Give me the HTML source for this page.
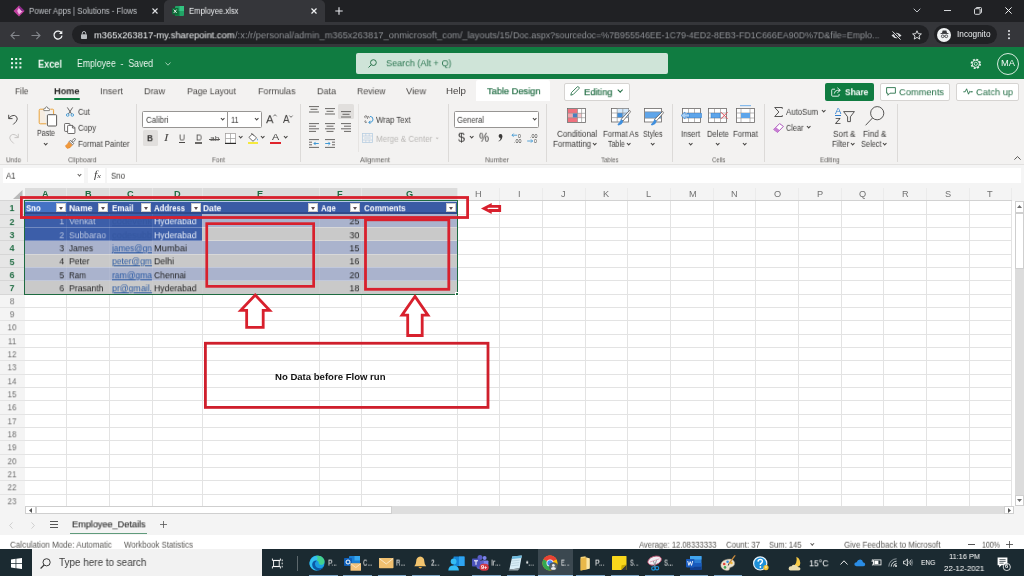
<!DOCTYPE html>
<html><head><meta charset="utf-8">
<style>
*{box-sizing:border-box;margin:0;padding:0}
html,body{width:1024px;height:576px;overflow:hidden;background:#fff}
body{font-family:"Liberation Sans",sans-serif;font-size:8px;color:#333;position:relative}
.a{position:absolute}
.t{position:absolute;white-space:nowrap;line-height:1;will-change:transform;transform:translateY(-50%) scaleX(var(--k,1));transform-origin:0 50%}
.r{transform-origin:100% 50%}
svg{position:absolute;overflow:visible}
b{font-weight:bold}
/* chrome */
#tabs{left:0;top:0;width:1024px;height:22px;background:#202124}
#tool{left:0;top:22px;width:1024px;height:25px;background:#35363a}
#atab{left:164px;top:0;width:161px;height:23px;background:#35363a;border-radius:5px 5px 0 0}
#omni{left:72px;top:25px;width:857px;height:19px;border-radius:10px;background:#202124}
#incog{left:934px;top:25px;width:63px;height:19px;border-radius:10px;background:#202124}
.ct{font-size:8.3px;color:#c3c6ca}
/* excel header */
#xh{left:0;top:47px;width:1024px;height:32px;background:#107c41}
#srch{left:356px;top:53px;width:312px;height:21px;border-radius:2px;background:#cfe4d8}
/* ribbon */
#rib{left:0;top:79px;width:1024px;height:86px;background:#f3f2f1}
.rt{font-size:9.6px;color:#484644}
.rl{font-size:7.4px;color:#605e5c}
.rs{font-size:8.3px;color:#3b3a39}
.sep{position:absolute;width:1px;top:104px;height:58px;background:#dcdad8}
.cv{position:absolute;width:3.4px;height:3.4px;border-right:0.9px solid #484644;border-bottom:0.9px solid #484644;transform:rotate(45deg)}
.box{position:absolute;background:#fff;border:1px solid #979593}

.gl{background:#e3e3e3}
.ch{font-size:9.2px;color:#727272}
.rh{font-size:9.8px;color:#5f5f5f;width:24px;text-align:center;transform-origin:50% 50%;--k:0.86}
.cell{font-size:9.4px}
.fb{width:9.9px;height:9.6px;background:#fff;border:0.5px solid #c9c9c9}
.fb:after{content:"";position:absolute;left:2px;top:3.4px;border-left:2.7px solid transparent;border-right:2.7px solid transparent;border-top:3px solid #5a4e4e}
.rb{border:2.6px solid #dc2430}
.sb{background:#fff;border:0.7px solid #cfcfcf}
.st{font-size:8.6px;color:#5a5855}

.ul{top:574.6px;height:1.4px;background:#7fa9c9}
.tl{top:562.8px;font-size:8.8px;color:#fff}
</style></head><body>
<!-- ===== CHROME ===== -->
<div class="a" id="tabs"></div>
<div class="a" id="tool"></div>
<div class="a" id="atab"></div>
<div class="a" id="omni"></div>
<div class="a" id="incog"></div>
<!-- power apps icon -->
<svg style="left:13px;top:5px" width="12" height="12" viewBox="0 0 12 12"><path d="M6 0.5 L11.5 6 L6 11.5 L0.5 6Z" fill="#c23fa0"></path><path d="M6 2.5 L9.5 6 L6 9.5 L4.2 6Z" fill="#f1b6e4"></path><path d="M6 0.5 L11.5 6 L8.5 6 L6 3Z" fill="#8a2a8a"></path></svg>
<span class="t ct" style="left: 29px; top: 11.3px; --w: 108; --k: 0.9456;">Power Apps | Solutions - Flows</span>
<svg style="left:152px;top:8px" width="6" height="6" viewBox="0 0 6 6"><path d="M0.5 0.5L5.5 5.5M5.5 0.5L0.5 5.5" stroke="#dfe1e4" stroke-width="1.1"></path></svg>
<!-- excel favicon -->
<svg style="left:172px;top:6px" width="12" height="10" viewBox="0 0 12 10"><rect x="3" y="0" width="9" height="10" rx="1" fill="#21a366"></rect><rect x="7.5" y="0" width="4.5" height="5" fill="#33c481"></rect><rect x="3" y="5" width="4.5" height="5" fill="#107c41"></rect><rect x="0" y="2" width="6.5" height="6.5" rx="0.8" fill="#0e6b38"></rect><path d="M1.8 3.6L4.6 6.9M4.6 3.6L1.8 6.9" stroke="#fff" stroke-width="0.9"></path></svg>
<span class="t ct" style="left: 189px; top: 11.3px; color: rgb(238, 240, 242); --w: 49.5; --k: 0.9252;">Employee.xlsx</span>
<svg style="left:311px;top:8px" width="6" height="6" viewBox="0 0 6 6"><path d="M0.5 0.5L5.5 5.5M5.5 0.5L0.5 5.5" stroke="#f1f3f4" stroke-width="1.2"></path></svg>
<svg style="left:335px;top:7px" width="8" height="8" viewBox="0 0 8 8"><path d="M4 0.3V7.7M0.3 4H7.7" stroke="#e8eaed" stroke-width="1.1"></path></svg>
<!-- window controls -->
<svg style="left:913px;top:8px" width="8" height="5" viewBox="0 0 8 5"><path d="M0.7 0.7L4 4L7.3 0.7" stroke="#bdc1c6" stroke-width="1" fill="none"></path></svg>
<div class="a" style="left:944px;top:9.5px;width:7px;height:1px;background:#d5d7da"></div>
<svg style="left:974px;top:6.5px" width="8" height="8" viewBox="0 0 8 8"><rect x="0.5" y="1.7" width="5.6" height="5.6" rx="1" stroke="#e8eaed" stroke-width="0.9" fill="none"></rect><path d="M2 1.7V1.3Q2 0.5 2.8 0.5H6.5Q7.5 0.5 7.5 1.5V5.2Q7.5 6 6.7 6H6.2" stroke="#e8eaed" stroke-width="0.9" fill="none"></path></svg>
<svg style="left:1005px;top:6.5px" width="7" height="7" viewBox="0 0 7 7"><path d="M0.4 0.4L6.6 6.6M6.6 0.4L0.4 6.6" stroke="#f1f3f4" stroke-width="1"></path></svg>
<!-- nav -->
<svg style="left:10px;top:30.5px" width="10" height="9" viewBox="0 0 10 9"><path d="M9.5 4.5H1.2M4.6 0.8L1 4.5L4.6 8.2" stroke="#83868b" stroke-width="1.1" fill="none"></path></svg>
<svg style="left:31px;top:30.5px" width="10" height="9" viewBox="0 0 10 9"><path d="M0.5 4.5H8.8M5.4 0.8L9 4.5L5.4 8.2" stroke="#83868b" stroke-width="1.1" fill="none"></path></svg>
<svg style="left:53px;top:30px" width="10" height="10" viewBox="0 0 10 10"><path d="M8.6 3.2A4 4 0 1 0 9 5.6" stroke="#f1f3f4" stroke-width="1.25" fill="none"></path><path d="M9.3 0.6V3.9H6Z" fill="#f1f3f4"></path></svg>
<!-- lock -->
<svg style="left:81px;top:30.5px" width="6" height="8" viewBox="0 0 6 8"><rect x="0" y="3.2" width="6" height="4.8" rx="0.8" fill="#b8bbbf"></rect><path d="M1.3 3.4V2.2A1.7 1.7 0 0 1 4.7 2.2V3.4" stroke="#b8bbbf" stroke-width="1" fill="none"></path></svg>
<span class="t" style="left: 94px; top: 35px; font-size: 9.4px; color: rgb(241, 243, 244); --w: 140.5; --k: 0.9961;">m365x263817-my.sharepoint.com</span>
<span class="t" style="left: 234.5px; top: 35px; font-size: 9.4px; color: rgb(143, 146, 150); --w: 277.5; --k: 0.9935;">/:x:/r/personal/admin_m365x263817_onmicrosoft_com/_layouts/15/</span>
<span class="t" style="left: 512.5px; top: 35px; font-size: 9.4px; color: rgb(143, 146, 150); --w: 366.5; --k: 0.9491;">Doc.aspx?sourcedoc=%7B955546EE-1C79-4ED2-8EB3-FD1C666EA90D%7D&amp;file=Emplo...</span>
<!-- eye-slash, star -->
<svg style="left:890.5px;top:30.5px" width="11" height="9" viewBox="0 0 11 9"><path d="M0.5 4.5Q5.5 -1.2 10.5 4.5Q5.5 10.2 0.5 4.5Z" fill="#d6d8db"></path><circle cx="5.5" cy="4.5" r="1.7" fill="#202124"></circle><path d="M1.2 0.2L9.8 8.8" stroke="#202124" stroke-width="2.4"></path><path d="M1.5 0.4L9.6 8.6" stroke="#d6d8db" stroke-width="1"></path></svg>
<svg style="left:912px;top:30px" width="10" height="10" viewBox="0 0 10 10"><path d="M5 0.8L6.25 3.7L9.4 3.95L7 6L7.75 9.1L5 7.4L2.25 9.1L3 6L0.6 3.95L3.75 3.7Z" stroke="#dfe1e4" stroke-width="0.95" fill="none" stroke-linejoin="round"></path></svg>
<!-- incognito -->
<div class="a" style="left:937px;top:27.5px;width:14px;height:14px;border-radius:7px;background:#f1f3f4"></div>
<svg style="left:939.5px;top:30px" width="9" height="9" viewBox="0 0 9 9"><path d="M2.6 0.6H6.4L7 3H2Z" fill="#35363a"></path><rect x="0.6" y="3" width="7.8" height="0.9" fill="#35363a"></rect><circle cx="2.7" cy="6.3" r="1.35" stroke="#35363a" stroke-width="0.8" fill="none"></circle><circle cx="6.3" cy="6.3" r="1.35" stroke="#35363a" stroke-width="0.8" fill="none"></circle><path d="M4 6.1H5" stroke="#35363a" stroke-width="0.7"></path></svg>
<span class="t" style="left: 957px; top: 34.6px; font-size: 8.2px; color: rgb(236, 238, 240); --w: 33.5; --k: 1.0080;">Incognito</span>
<div class="a" style="left:1008px;top:30.3px;width:2px;height:2px;border-radius:1px;background:#e8eaed;box-shadow:0 3.6px 0 #e8eaed,0 7.2px 0 #e8eaed"></div>
<!-- ===== EXCEL HEADER ===== -->
<div class="a" id="xh"></div>
<div class="a" id="srch"></div>
<div class="a" style="left:10.5px;top:58px;width:2px;height:2px;background:#e9f4ee;box-shadow:4.2px 0 #e9f4ee,8.4px 0 #e9f4ee,0 4.2px #e9f4ee,4.2px 4.2px #e9f4ee,8.4px 4.2px #e9f4ee,0 8.4px #e9f4ee,4.2px 8.4px #e9f4ee,8.4px 8.4px #e9f4ee"></div>
<span class="t" style="left: 37.5px; top: 63.5px; font-size: 10.6px; color: rgb(244, 250, 246); font-weight: bold; --w: 24; --k: 0.8668;">Excel</span>
<span class="t" style="left: 77px; top: 64.2px; font-size: 10px; color: rgb(234, 244, 238); --w: 76; --k: 0.8709;">Employee&nbsp; -&nbsp; Saved</span>
<svg style="left:165px;top:61.5px" width="6" height="4" viewBox="0 0 6 4"><path d="M0.5 0.5L3 3.2L5.5 0.5" stroke="#bfe0cd" stroke-width="0.8" fill="none"></path></svg>
<svg style="left:368px;top:58.5px" width="9" height="9" viewBox="0 0 9 9"><circle cx="5.4" cy="3.6" r="2.9" stroke="#1b6b3f" stroke-width="0.9" fill="none"></circle><path d="M3.3 5.7L0.5 8.5" stroke="#1b6b3f" stroke-width="0.9"></path></svg>
<span class="t" style="left: 385.5px; top: 63.4px; font-size: 9.6px; color: rgb(43, 117, 80); --w: 65.5; --k: 0.9486;">Search (Alt + Q)</span>
<!-- gear -->
<svg style="left:970.2px;top:57.7px" width="11.6" height="11.6" viewBox="0 0 11.6 11.6"><circle cx="5.8" cy="5.8" r="4.35" stroke="#e6f2eb" stroke-width="1.7" stroke-dasharray="1.9 1.516" fill="none"></circle><circle cx="5.8" cy="5.8" r="3.6" stroke="#e6f2eb" stroke-width="0.9" fill="none"></circle><circle cx="5.8" cy="5.8" r="1.6" stroke="#e6f2eb" stroke-width="0.8" fill="none"></circle></svg>
<div class="a" style="left:997px;top:52.5px;width:22px;height:22px;border-radius:11px;border:1px solid #d7ebdf"></div>
<span class="t" style="left: 1001px; top: 63.8px; font-size: 8.2px; color: rgb(240, 248, 243); --w: 14; --k: 1.1399;">MA</span>
<!-- ===== RIBBON ===== -->
<div class="a" id="rib"></div>
<!-- tabs -->
<div class="a" style="left:476px;top:80px;width:74px;height:21px;background:#fff;border-radius:2px 2px 0 0"></div>
<span class="t rt" style="left: 15px; top: 90.7px; --w: 13.5; --k: 0.8727;">File</span>
<span class="t rt" style="left: 54px; top: 90.7px; color: rgb(37, 36, 35); font-weight: bold; --w: 25.5; --k: 0.9566;">Home</span>
<div class="a" style="left:54px;top:98px;width:25.5px;height:2.2px;background:#107c41;border-radius:1px"></div>
<span class="t rt" style="left: 100px; top: 90.7px; --w: 23; --k: 0.9583;">Insert</span>
<span class="t rt" style="left: 144px; top: 90.7px; --w: 21; --k: 0.9379;">Draw</span>
<span class="t rt" style="left: 187px; top: 90.7px; --w: 49; --k: 0.9092;">Page Layout</span>
<span class="t rt" style="left: 258px; top: 90.7px; --w: 37.5; --k: 0.9379;">Formulas</span>
<span class="t rt" style="left: 317px; top: 90.7px; --w: 19; --k: 0.9375;">Data</span>
<span class="t rt" style="left: 357px; top: 90.7px; --w: 28.5; --k: 0.9057;">Review</span>
<span class="t rt" style="left: 406px; top: 90.7px; --w: 20; --k: 0.9697;">View</span>
<span class="t rt" style="left: 446px; top: 90.7px; --w: 20; --k: 1.0135;">Help</span>
<span class="t rt" style="left: 487px; top: 91.1px; color: rgb(30, 107, 65); -webkit-text-stroke: 0.2px rgb(30, 107, 65); --w: 53.5; --k: 0.9645;">Table Design</span>
<!-- editing button -->
<div class="a" style="left:564px;top:83px;width:65.5px;height:17.5px;background:#fff;border:1px solid #d6d4d2;border-radius:2px"></div>
<svg style="left:569.5px;top:86px" width="10" height="10" viewBox="0 0 10 10"><path d="M0.8 9.2L1.5 6.5L7.3 0.8Q8 0.3 8.7 1Q9.6 1.8 9 2.6L3.3 8.4Z" stroke="#1e6b41" stroke-width="0.85" fill="none" stroke-linejoin="round"></path></svg>
<span class="t" style="left: 583.7px; top: 91.7px; font-size: 9.6px; color: rgb(30, 107, 65); -webkit-text-stroke: 0.2px rgb(30, 107, 65); --w: 28.5; --k: 0.9712;">Editing</span>
<div class="cv" style="left:617.6px;top:88.4px;width:4.4px;height:4.4px;border-color:#1e6b41"></div>
<!-- share / comments / catch up -->
<div class="a" style="left:825px;top:83px;width:49px;height:17.5px;background:#107c41;border-radius:2px"></div>
<svg style="left:830.5px;top:86.5px" width="10" height="10" viewBox="0 0 10 10"><path d="M4 2.2H1.6Q0.7 2.2 0.7 3.1V8.3Q0.7 9.2 1.6 9.2H7.2Q8.1 9.2 8.1 8.3V7" stroke="#fff" stroke-width="0.85" fill="none"></path><path d="M6.3 0.7L9.3 3.3L6.3 5.9M9.1 3.3H6.5Q3.6 3.5 3.3 6.6" stroke="#fff" stroke-width="0.85" fill="none"></path></svg>
<span class="t" style="left: 844.7px; top: 91.8px; font-size: 9.6px; color: rgb(255, 255, 255); font-weight: bold; --w: 23.3; --k: 0.8736;">Share</span>
<div class="a" style="left:880px;top:83px;width:70px;height:17.5px;background:#fff;border:1px solid #d6d4d2;border-radius:2px"></div>
<svg style="left:885.5px;top:87px" width="10" height="9" viewBox="0 0 10 9"><path d="M0.6 0.6H9.4V6.2H4L1.9 8.3V6.2H0.6Z" stroke="#1e6b41" stroke-width="0.85" fill="none" stroke-linejoin="round"></path></svg>
<span class="t" style="left: 899px; top: 91.8px; font-size: 9.6px; color: rgb(30, 107, 65); --w: 45; --k: 0.9700;">Comments</span>
<div class="a" style="left:956px;top:83px;width:62.5px;height:17.5px;background:#fff;border:1px solid #d6d4d2;border-radius:2px"></div>
<svg style="left:962.5px;top:88px" width="10" height="7" viewBox="0 0 10 7"><path d="M0.3 3.8H2.2L3.6 0.8L5.5 6.2L6.8 3.2L7.5 3.8H8.3" stroke="#1e6b41" stroke-width="0.85" fill="none" stroke-linejoin="round"></path><circle cx="8.9" cy="3.8" r="0.8" fill="#1e6b41"></circle></svg>
<span class="t" style="left: 975.5px; top: 91.8px; font-size: 9.6px; color: rgb(30, 107, 65); --w: 37; --k: 0.9634;">Catch up</span>
<!-- separators -->
<div class="sep" style="left:27px"></div><div class="sep" style="left:136px"></div><div class="sep" style="left:300px"></div>
<div class="sep" style="left:358px;height:48px;background:#e6e4e2"></div>
<div class="sep" style="left:448px"></div><div class="sep" style="left:545.5px"></div><div class="sep" style="left:672px"></div><div class="sep" style="left:764px"></div><div class="sep" style="left:896.5px"></div>
<!-- group labels -->
<span class="t rl" style="left: 6px; top: 159.7px; --w: 15; --k: 0.8488;">Undo</span>
<span class="t rl" style="left: 67.5px; top: 159.7px; --w: 28.5; --k: 0.9007;">Clipboard</span>
<span class="t rl" style="left: 212px; top: 159.7px; --w: 13; --k: 0.8786;">Font</span>
<span class="t rl" style="left: 359.5px; top: 159.7px; --w: 30; --k: 0.9125;">Alignment</span>
<span class="t rl" style="left: 485.3px; top: 159.7px; --w: 24; --k: 0.9127;">Number</span>
<span class="t rl" style="left: 600.5px; top: 159.7px; --w: 17.5; --k: 0.8187;">Tables</span>
<span class="t rl" style="left: 711.6px; top: 159.7px; --w: 13.4; --k: 0.8152;">Cells</span>
<span class="t rl" style="left: 820.4px; top: 159.7px; --w: 19.6; --k: 0.8669;">Editing</span>
<!-- undo/redo -->
<svg style="left:8px;top:113.5px" width="10" height="11" viewBox="0 0 10 11"><path d="M0.7 0.8V4.6H4.5" stroke="#3b3a39" stroke-width="0.9" fill="none"></path><path d="M0.9 4.4Q3.2 0.9 6.3 1.4Q9.3 2.2 9.3 5Q9.1 7.2 5.2 10.5" stroke="#3b3a39" stroke-width="0.9" fill="none"></path></svg>
<svg style="left:8.5px;top:132.5px" width="10" height="11" viewBox="0 0 10 11"><path d="M9.3 0.8V4.6H5.5" stroke="#c3c1bf" stroke-width="0.9" fill="none"></path><path d="M9.1 4.4Q6.8 0.9 3.7 1.4Q0.7 2.2 0.7 5Q0.9 7.2 4.8 10.5" stroke="#c3c1bf" stroke-width="0.9" fill="none"></path></svg>
<!-- paste -->
<svg style="left:38px;top:106px" width="20" height="21" viewBox="0 0 20 21"><path d="M6.3 3.2H2.2Q1.2 3.2 1.2 4.2V16.8Q1.2 17.8 2.2 17.8H8.3M12.3 3.2H14.6Q15.6 3.2 15.6 4.2V8" stroke="#e9a23b" stroke-width="1" fill="#fbe6c4" fill-opacity="0.35"></path><path d="M5.8 4.6V3.2Q5.8 2.4 6.6 2.4H7.4Q7.6 0.7 8.6 0.7Q9.6 0.7 9.8 2.4H10.6Q11.4 2.4 11.4 3.2V4.6Z" stroke="#6b6966" stroke-width="0.8" fill="#fff"></path><rect x="9.4" y="8.7" width="9.2" height="11.3" rx="0.9" stroke="#4a4846" stroke-width="0.9" fill="#fff"></rect></svg>
<span class="t rs" style="left: 37px; top: 133.2px; --w: 18; --k: 0.8483;">Paste</span>
<div class="cv" style="left:43.7px;top:141.6px"></div>
<!-- cut copy format painter -->
<svg style="left:66px;top:107px" width="8" height="10" viewBox="0 0 8 10"><path d="M1.3 0.4L5.6 7M6.7 0.4L2.4 7" stroke="#4a4846" stroke-width="0.8"></path><circle cx="1.7" cy="8" r="1.3" stroke="#2f8fd0" stroke-width="0.8" fill="none"></circle><circle cx="6.3" cy="8" r="1.3" stroke="#2f8fd0" stroke-width="0.8" fill="none"></circle></svg>
<span class="t rs" style="left: 78px; top: 112.2px; --w: 12; --k: 0.9287;">Cut</span>
<svg style="left:64px;top:122.5px" width="12" height="11" viewBox="0 0 12 11"><path d="M3.6 8.4H1.3Q0.6 8.4 0.6 7.7V1.2Q0.6 0.5 1.3 0.5H5.2Q5.9 0.5 5.9 1.2V2.2" stroke="#4a4846" stroke-width="0.8" fill="#fff"></path><path d="M4.3 2.4H8.6L10.9 4.7V9.8Q10.9 10.5 10.2 10.5H4.3Q3.6 10.5 3.6 9.8V3.1Q3.6 2.4 4.3 2.4ZM8.4 2.6V5H10.8" stroke="#4a4846" stroke-width="0.8" fill="#fff"></path></svg>
<span class="t rs" style="left: 78px; top: 128.2px; --w: 18; --k: 0.9290;">Copy</span>
<svg style="left:65px;top:138px" width="11" height="11" viewBox="0 0 11 11"><path d="M6.6 3L9.4 0.5Q10.4 0.3 10.5 1.4L8.2 4.4Z" stroke="#4a4846" stroke-width="0.7" fill="#fff"></path><path d="M5.2 2.4L8.7 5.6L7.6 6.8L4.1 3.6Z" stroke="#4a4846" stroke-width="0.7" fill="#fff"></path><path d="M3.7 3.9L7.2 7.2Q5.6 10.2 2.2 10.4Q0.9 9.4 0.4 7.7Q2.8 6.5 3.7 3.9Z" fill="#f0993a" stroke="#e0812a" stroke-width="0.5"></path></svg>
<span class="t rs" style="left: 78px; top: 144.2px; --w: 51.5; --k: 0.9385;">Format Painter</span>
<!-- font group -->
<div class="box" style="left:142px;top:111.3px;width:86px;height:16.6px;border-radius:1.5px 0 0 1.5px"></div>
<div class="box" style="left:227px;top:111.3px;width:34.5px;height:16.6px;border-radius:0 1.5px 1.5px 0"></div>
<span class="t rs" style="left: 145.5px; top: 120px; --w: 22.5; --k: 0.9568;">Calibri</span>
<div class="cv" style="left:221px;top:116.6px"></div>
<span class="t rs" style="left: 231px; top: 120px; --w: 7.5; --k: 0.8696;">11</span>
<div class="cv" style="left:255px;top:116.6px"></div>
<span class="t" style="left: 266px; top: 119px; font-size: 11.6px; color: rgb(59, 58, 57); --w: 7.5; --k: 0.9697;">A</span>
<svg style="left:273.3px;top:114.3px" width="4" height="3" viewBox="0 0 4 3"><path d="M0.4 2.3L2 0.6L3.6 2.3" stroke="#3b3a39" stroke-width="0.7" fill="none"></path></svg>
<span class="t" style="left: 283px; top: 119.5px; font-size: 10.2px; color: rgb(59, 58, 57); --w: 6.5; --k: 0.9563;">A</span>
<svg style="left:289.3px;top:114.6px" width="4" height="3" viewBox="0 0 4 3"><path d="M0.4 0.6L2 2.3L3.6 0.6" stroke="#3b3a39" stroke-width="0.7" fill="none"></path></svg>
<div class="a" style="left:142.7px;top:130.2px;width:15.6px;height:15.8px;background:#e1dfdd;border-radius:1.5px"></div>
<span class="t" style="left: 147px; top: 138.2px; font-size: 9.6px; color: rgb(50, 49, 48); font-weight: bold; --w: 6; --k: 0.8649;">B</span>
<span class="t" style="left: 164px; top: 138.2px; font-size: 9.6px; color: rgb(74, 72, 70); font-style: italic; font-family: &quot;Liberation Serif&quot;, serif; --w: 4.5; --k: 1.4049;">I</span>
<span class="t" style="left: 178.8px; top: 137.8px; font-size: 9px; color: rgb(74, 72, 70); --w: 6; --k: 0.9231;">U</span>
<div class="a" style="left:178.5px;top:142.3px;width:6.6px;height:0.9px;background:#4a4846"></div>
<span class="t" style="left: 195.5px; top: 137.5px; font-size: 9px; color: rgb(74, 72, 70); --w: 6; --k: 0.9231;">D</span>
<div class="a" style="left:195px;top:141.7px;width:7px;height:2.3px;border-top:0.8px solid #6a6866;border-bottom:0.8px solid #6a6866"></div>
<span class="t" style="left: 209.5px; top: 138.6px; font-size: 7.6px; color: rgb(90, 88, 86); --w: 9.5; --k: 1.1238;">ab</span>
<div class="a" style="left:208.5px;top:138.6px;width:11.5px;height:0.9px;background:#5a5856"></div>
<svg style="left:225px;top:132.5px" width="11" height="11" viewBox="0 0 11 11"><rect x="0.5" y="0.5" width="10" height="10" stroke="#9a9896" stroke-width="0.7" fill="#fff"></rect><path d="M5.5 0.5V10.5M0.5 5.5H10.5" stroke="#9a9896" stroke-width="0.7"></path><path d="M0 10.4H11" stroke="#2b2a29" stroke-width="1.2"></path></svg>
<div class="cv" style="left:238.7px;top:135px"></div>
<svg style="left:248px;top:132.5px" width="11" height="9" viewBox="0 0 11 9"><path d="M4.4 0.9L8.6 4.9L5 8.3L0.9 4.4Z" stroke="#4a4846" stroke-width="0.8" fill="#fff" stroke-linejoin="round"></path><path d="M3.2 0.3L5.6 2.6" stroke="#4a4846" stroke-width="0.8"></path><path d="M9.3 5.2Q10.5 7 9.6 7.6Q8.6 7.6 9.3 5.2Z" fill="#2f8fd0"></path></svg>
<div class="a" style="left:247.8px;top:141.5px;width:10.4px;height:2.2px;background:#f5e93d"></div>
<div class="cv" style="left:261px;top:135px"></div>
<span class="t" style="left: 271.8px; top: 136.6px; font-size: 9.8px; color: rgb(59, 58, 57); --w: 7.2; --k: 1.0998;">A</span>
<div class="a" style="left:270.2px;top:141.5px;width:10.8px;height:2.2px;background:#e0242c"></div>
<div class="cv" style="left:284px;top:135px"></div>
<!-- alignment -->
<div class="a" style="left:338.4px;top:104px;width:15.6px;height:15px;background:#e1dfdd;border-radius:1.5px"></div>
<svg style="left:309px;top:105.5px" width="10" height="7" viewBox="0 0 10 7"><path d="M0 0.6H10M1.5 3.3H8.5M0 6H10" stroke="#5a5856" stroke-width="0.9"></path></svg>
<svg style="left:325px;top:108px" width="10" height="7" viewBox="0 0 10 7"><path d="M0 0.6H10M1.5 3.3H8.5M0 6H10" stroke="#5a5856" stroke-width="0.9"></path></svg>
<svg style="left:341px;top:110.5px" width="10" height="7" viewBox="0 0 10 7"><path d="M0 0.6H10M1.5 3.3H8.5M0 6H10" stroke="#5a5856" stroke-width="0.9"></path></svg>
<svg style="left:309px;top:122.5px" width="10" height="9" viewBox="0 0 10 9"><path d="M0 0.6H10M0 3.2H7M0 5.8H10M0 8.4H7" stroke="#5a5856" stroke-width="0.9"></path></svg>
<svg style="left:325px;top:122.5px" width="10" height="9" viewBox="0 0 10 9"><path d="M0 0.6H10M1.5 3.2H8.5M0 5.8H10M1.5 8.4H8.5" stroke="#5a5856" stroke-width="0.9"></path></svg>
<svg style="left:341px;top:122.5px" width="10" height="9" viewBox="0 0 10 9"><path d="M0 0.6H10M3 3.2H10M0 5.8H10M3 8.4H10" stroke="#5a5856" stroke-width="0.9"></path></svg>
<svg style="left:309px;top:138.5px" width="10" height="9" viewBox="0 0 10 9"><path d="M0 0.6H10M0 8.4H10M0 3.2H3M0 5.8H3" stroke="#5a5856" stroke-width="0.9"></path><path d="M9.8 4.5H5M6.6 2.9L5 4.5L6.6 6.1" stroke="#2f8fd0" stroke-width="0.9" fill="none"></path></svg>
<svg style="left:325px;top:138.5px" width="10" height="9" viewBox="0 0 10 9"><path d="M0 0.6H10M0 8.4H10M7 3.2H10M7 5.8H10" stroke="#5a5856" stroke-width="0.9"></path><path d="M0.2 4.5H5M3.4 2.9L5 4.5L3.4 6.1" stroke="#2f8fd0" stroke-width="0.9" fill="none"></path></svg>
<!-- wrap text / merge -->
<svg style="left:364px;top:115px" width="10" height="10" viewBox="0 0 10 10"><path d="M1.2 3.2L0.6 1.4L2.2 0.6L2.8 2.2M3.6 4L3 2.2L4.6 1.4L5.4 3.2M1.8 5.6L0.8 6L1.4 7.6L3 7" stroke="#5a5856" stroke-width="0.7" fill="none"></path><path d="M6 1.3Q9.4 1.6 9 5Q8.6 7.6 5 7.4M6.4 5.8L4.8 7.4L6.4 9" stroke="#2f8fd0" stroke-width="0.9" fill="none"></path></svg>
<span class="t rs" style="left: 376.4px; top: 120.2px; --w: 34.6; --k: 0.9340;">Wrap Text</span>
<svg style="left:362.4px;top:133px" width="11" height="10" viewBox="0 0 11 10"><rect x="0.5" y="0.5" width="10" height="9" stroke="#b9cfe2" stroke-width="0.8" fill="#f3f2f1"></rect><path d="M0.5 3H10.5M0.5 7H10.5M3.8 0.5V3M7.2 0.5V3M3.8 7V9.5M7.2 7V9.5" stroke="#b9cfe2" stroke-width="0.7"></path><path d="M2.2 5H8.8" stroke="#b9cfe2" stroke-width="0.8"></path></svg>
<span class="t rs" style="left: 376.4px; top: 138.8px; color: rgb(186, 184, 182); --w: 56.3; --k: 0.9611;">Merge &amp; Center</span>
<div class="cv" style="left:436px;top:136.6px;width:2.4px;height:2.4px;border-color:#c8c6c4"></div>
<!-- number -->
<div class="box" style="left:454px;top:111.3px;width:84.6px;height:16.6px;border-radius:1.5px"></div>
<span class="t rs" style="left: 457px; top: 120px; --w: 27; --k: 0.9143;">General</span>
<div class="cv" style="left:533px;top:116.6px"></div>
<span class="t" style="left: 458px; top: 138.2px; font-size: 12.6px; color: rgb(59, 58, 57); --w: 7; --k: 0.9978;">$</span>
<div class="cv" style="left:470px;top:135.4px"></div>
<span class="t" style="left: 479px; top: 138.2px; font-size: 12.6px; color: rgb(59, 58, 57); --w: 10; --k: 0.8926;">%</span>
<svg style="left:498px;top:134px" width="5" height="8" viewBox="0 0 5 8"><circle cx="2.5" cy="2" r="1.9" fill="#3b3a39"></circle><path d="M4.3 2Q4.6 5.6 0.8 7.6L0.5 7.1Q2.8 5.6 2.6 3.4Z" fill="#3b3a39"></path></svg>
<svg style="left:510.5px;top:133px" width="11" height="10" viewBox="0 0 11 10"><path d="M6.2 2.2H1M2.6 0.6L1 2.2L2.6 3.8" stroke="#2f8fd0" stroke-width="0.8" fill="none"></path></svg>
<span class="t" style="left:517.5px;top:135.6px;font-size:5px;color:#3b3a39">0</span>
<span class="t" style="left: 513.5px; top: 140.8px; font-size: 5px; color: rgb(59, 58, 57); --w: 7.5; --k: 1.0787;">.00</span>
<span class="t" style="left: 529.5px; top: 135.6px; font-size: 5px; color: rgb(59, 58, 57); --w: 7.5; --k: 1.0787;">.00</span>
<svg style="left:526.5px;top:138.5px" width="7" height="4" viewBox="0 0 7 4"><path d="M0.2 2H5.6M4 0.4L5.6 2L4 3.6" stroke="#2f8fd0" stroke-width="0.8" fill="none"></path></svg>
<span class="t" style="left:534px;top:140.8px;font-size:5px;color:#3b3a39">0</span>
<!-- conditional formatting -->
<svg style="left:567px;top:108px" width="19" height="15" viewBox="0 0 19 15"><rect x="0.5" y="0.5" width="18" height="14" fill="#fff" stroke="#6a6866" stroke-width="0.8"></rect><rect x="1" y="1" width="9.5" height="4.3" fill="#f0717e"></rect><rect x="1" y="5.3" width="4.8" height="4.4" fill="#f5a3ab"></rect><rect x="5.8" y="5.3" width="4.7" height="4.4" fill="#4a7fc0"></rect><rect x="1" y="9.7" width="9.5" height="4.3" fill="#f0717e"></rect><rect x="10.5" y="5.3" width="4" height="4.4" fill="#f7c5ca"></rect><path d="M0.5 5.3H18.5M0.5 9.7H18.5M10.5 0.5V14.5M14.6 0.5V14.5" stroke="#8a8886" stroke-width="0.6"></path></svg>
<span class="t rs" style="left: 556.6px; top: 133.8px; --w: 40.2; --k: 0.9683;">Conditional</span>
<span class="t rs" style="left: 553.3px; top: 144.4px; --w: 38.1; --k: 0.9608;">Formatting</span>
<div class="cv" style="left:593.3px;top:141.6px"></div>
<!-- format as table -->
<svg style="left:611px;top:108px" width="20" height="18" viewBox="0 0 20 18"><rect x="0.5" y="0.5" width="17" height="13.5" fill="#fff" stroke="#6a6866" stroke-width="0.8"></rect><rect x="6.2" y="5" width="5.6" height="4.6" fill="#3f8fde"></rect><rect x="11.8" y="5" width="5.6" height="4.6" fill="#a9d0f5"></rect><rect x="6.2" y="0.8" width="11.2" height="4.2" fill="#d5e9fb"></rect><path d="M0.5 5H17.5M0.5 9.6H17.5M6.2 0.5V14M11.8 0.5V14" stroke="#8a8886" stroke-width="0.6"></path><path d="M18.6 2.4Q19.8 3 19.2 4.2L12 13L10 11.4Z" fill="#fff" stroke="#4a4846" stroke-width="0.7"></path><path d="M10 11.2L12.2 13Q11.6 16.6 7.6 17.4Q6.4 17.2 6.6 16.2Q8.8 14.8 10 11.2Z" fill="#3f8fde"></path></svg>
<span class="t rs" style="left: 602.7px; top: 133.8px; --w: 35.5; --k: 0.9388;">Format As</span>
<span class="t rs" style="left: 608.4px; top: 144.4px; --w: 16.8; --k: 0.8466;">Table</span>
<div class="cv" style="left:627.3px;top:141.6px"></div>
<!-- styles -->
<svg style="left:643.7px;top:108px" width="20" height="18" viewBox="0 0 20 18"><rect x="0.5" y="0.5" width="17" height="13.5" fill="#fff" stroke="#6a6866" stroke-width="0.8"></rect><rect x="1" y="3.8" width="16" height="6.4" fill="#5ea5ea"></rect><path d="M0.5 3.8H17.5M0.5 10.2H17.5" stroke="#8a8886" stroke-width="0.6"></path><path d="M18.6 3.4Q19.8 4 19.2 5.2L12.4 13L10.4 11.4Z" fill="#fff" stroke="#4a4846" stroke-width="0.7"></path><path d="M10.4 11.2L12.6 13Q12 16.6 8 17.4Q6.8 17.2 7 16.2Q9.2 14.8 10.4 11.2Z" fill="#3f8fde"></path></svg>
<span class="t rs" style="left: 643.3px; top: 133.8px; --w: 19.5; --k: 0.8631;">Styles</span>
<div class="cv" style="left:651.3px;top:141.6px"></div>
<!-- insert delete format -->
<svg style="left:680.8px;top:108px" width="21" height="15" viewBox="0 0 21 15"><rect x="1.5" y="0.5" width="18" height="14" fill="#fff" stroke="#6a6866" stroke-width="0.8"></rect><path d="M1.5 5H19.5M1.5 10H19.5M7.5 0.5V14.5M13.5 0.5V14.5" stroke="#8a8886" stroke-width="0.6"></path><rect x="6" y="5.2" width="14.6" height="4.6" fill="#5ea5ea" stroke="#2f7fd0" stroke-width="0.5"></rect><path d="M0 7.5L4 4V6H8.5V9H4V11Z" fill="#a9d0f5" stroke="#2f7fd0" stroke-width="0.6"></path></svg>
<span class="t rs" style="left: 681.2px; top: 133.8px; --w: 19.1; --k: 0.9198;">Insert</span>
<div class="cv" style="left:689.3px;top:141.6px"></div>
<svg style="left:707.7px;top:108px" width="20" height="15" viewBox="0 0 20 15"><rect x="0.5" y="0.5" width="18" height="14" fill="#fff" stroke="#6a6866" stroke-width="0.8"></rect><path d="M0.5 5H18.5M0.5 10H18.5M6.5 0.5V14.5M12.5 0.5V14.5" stroke="#8a8886" stroke-width="0.6"></path><rect x="3" y="5.2" width="9" height="4.6" fill="#5ea5ea" stroke="#2f7fd0" stroke-width="0.5"></rect><path d="M13 4.2L19.6 10.8M19.6 4.2L13 10.8" stroke="#e0525c" stroke-width="1"></path></svg>
<span class="t rs" style="left: 706.6px; top: 133.8px; --w: 22; --k: 0.9173;">Delete</span>
<div class="cv" style="left:715.8px;top:141.6px"></div>
<svg style="left:735.5px;top:105px" width="19" height="18" viewBox="0 0 19 18"><path d="M4 0.7H15" stroke="#5ea5ea" stroke-width="0.9"></path><rect x="0.5" y="3.5" width="18" height="14" fill="#fff" stroke="#6a6866" stroke-width="0.8"></rect><path d="M0.5 8H18.5M0.5 13H18.5M5 3.5V17.5M14 3.5V17.5" stroke="#8a8886" stroke-width="0.6"></path><rect x="5" y="8" width="9" height="5" fill="#5ea5ea"></rect></svg>
<span class="t rs" style="left: 732.5px; top: 133.8px; --w: 24.8; --k: 0.9436;">Format</span>
<div class="cv" style="left:743.1px;top:141.6px"></div>
<!-- editing group -->
<svg style="left:773.5px;top:107px" width="9" height="10" viewBox="0 0 9 10"><path d="M8.3 1.8V0.5H0.7L4.9 5L0.7 9.5H8.3V8.2" stroke="#3b3a39" stroke-width="0.85" fill="none" stroke-linejoin="miter"></path></svg>
<span class="t rs" style="left: 785.9px; top: 112.2px; --w: 32.1; --k: 0.9402;">AutoSum</span>
<div class="cv" style="left:821.7px;top:109.2px"></div>
<svg style="left:772.6px;top:122.5px" width="11" height="10" viewBox="0 0 11 10"><path d="M6.6 0.6L10.4 3.4L4.6 9.4L0.7 6.5Z" fill="#fff" stroke="#a64bb5" stroke-width="0.9" stroke-linejoin="round"></path><path d="M2.9 4.3L6.8 7.2L4.6 9.4L0.7 6.5Z" fill="#c77ed3"></path></svg>
<span class="t rs" style="left: 785.9px; top: 128.2px; --w: 17.5; --k: 0.8826;">Clear</span>
<div class="cv" style="left:807px;top:125.2px"></div>
<span class="t" style="left: 835px; top: 111.2px; font-size: 8.6px; color: rgb(47, 127, 208); --w: 6.4; --k: 1.1161;">A</span>
<div class="a" style="left:835px;top:115.3px;width:6.4px;height:0.8px;background:#2f7fd0"></div>
<span class="t" style="left: 835.4px; top: 120.6px; font-size: 8.8px; color: rgb(59, 58, 57); --w: 5.8; --k: 1.0791;">Z</span>
<svg style="left:842.5px;top:110.5px" width="12" height="12" viewBox="0 0 12 12"><path d="M0.6 0.6H11.4L7.4 5.8V10.6H4.6V5.8Z" stroke="#3b3a39" stroke-width="0.85" fill="none" stroke-linejoin="round"></path></svg>
<span class="t rs" style="left: 833.4px; top: 133.8px; --w: 22.4; --k: 0.9713;">Sort &amp;</span>
<span class="t rs" style="left: 832.2px; top: 144.4px; --w: 17.2; --k: 0.9329;">Filter</span>
<div class="cv" style="left:851.3px;top:141.6px"></div>
<svg style="left:864.5px;top:106px" width="20" height="20" viewBox="0 0 20 20"><circle cx="12.2" cy="7.2" r="6.6" stroke="#3b3a39" stroke-width="0.85" fill="none"></circle><path d="M7.5 12L0.6 19.3" stroke="#3b3a39" stroke-width="0.85"></path></svg>
<span class="t rs" style="left: 862.7px; top: 133.8px; --w: 23.3; --k: 0.9715;">Find &amp;</span>
<span class="t rs" style="left: 860.5px; top: 144.4px; --w: 20.5; --k: 0.8889;">Select</span>
<div class="cv" style="left:883.3px;top:141.6px"></div>
<svg style="left:1014px;top:156px" width="7" height="4" viewBox="0 0 7 4"><path d="M0.4 3.6L3.5 0.6L6.6 3.6" stroke="#3b3a39" stroke-width="0.85" fill="none"></path></svg>
<!--RIBBON-CONTENT-->
<!-- ===== FORMULA ===== -->
<div class="a" style="left:0;top:164px;width:1024px;height:24px;background:#f5f5f5;border-top:1px solid #e2e1e0"></div>
<div class="a" style="left:3px;top:168px;width:81px;height:15px;background:#fff"></div>
<div class="a" style="left:88px;top:168px;width:17px;height:15px;background:#fff"></div>
<div class="a" style="left:107px;top:168px;width:914px;height:15px;background:#fff"></div>
<span class="t" style="left: 5.5px; top: 175.8px; font-size: 8.6px; color: rgb(59, 58, 57); --w: 9.5; --k: 0.9034;">A1</span>
<div class="cv" style="left:78.3px;top:172.6px;width:3px;height:3px;border-color:#605e5c"></div>
<span class="t" style="left: 94px; top: 175.6px; font-size: 9.4px; color: rgb(59, 58, 57); font-family: &quot;Liberation Serif&quot;, serif; font-style: italic; --w: 7; --k: 1.2620;"><i>f</i><span style="font-size:6.6px">x</span></span>
<span class="t" style="left: 111px; top: 175.8px; font-size: 8.6px; color: rgb(59, 58, 57); --w: 14; --k: 0.9152;">Sno</span>
<!--FORMULA-CONTENT-->
<!-- ===== GRID ===== -->
<div class="a" style="left:0;top:183px;width:1024px;height:18px;background:#f4f4f4"></div>
<div class="a" style="left:24.5px;top:200.67px;width:987px;height:305.3px;background:#fff"></div>
<div class="a gl" style="left:24.5px;top:200.17px;width:987px;height:1px"></div>
<div class="a gl" style="left:24.5px;top:213.50px;width:987px;height:1px"></div>
<div class="a gl" style="left:24.5px;top:226.84px;width:987px;height:1px"></div>
<div class="a gl" style="left:24.5px;top:240.17px;width:987px;height:1px"></div>
<div class="a gl" style="left:24.5px;top:253.50px;width:987px;height:1px"></div>
<div class="a gl" style="left:24.5px;top:266.84px;width:987px;height:1px"></div>
<div class="a gl" style="left:24.5px;top:280.17px;width:987px;height:1px"></div>
<div class="a gl" style="left:24.5px;top:293.50px;width:987px;height:1px"></div>
<div class="a gl" style="left:24.5px;top:306.84px;width:987px;height:1px"></div>
<div class="a gl" style="left:24.5px;top:320.17px;width:987px;height:1px"></div>
<div class="a gl" style="left:24.5px;top:333.50px;width:987px;height:1px"></div>
<div class="a gl" style="left:24.5px;top:346.84px;width:987px;height:1px"></div>
<div class="a gl" style="left:24.5px;top:360.17px;width:987px;height:1px"></div>
<div class="a gl" style="left:24.5px;top:373.50px;width:987px;height:1px"></div>
<div class="a gl" style="left:24.5px;top:386.84px;width:987px;height:1px"></div>
<div class="a gl" style="left:24.5px;top:400.17px;width:987px;height:1px"></div>
<div class="a gl" style="left:24.5px;top:413.50px;width:987px;height:1px"></div>
<div class="a gl" style="left:24.5px;top:426.84px;width:987px;height:1px"></div>
<div class="a gl" style="left:24.5px;top:440.17px;width:987px;height:1px"></div>
<div class="a gl" style="left:24.5px;top:453.50px;width:987px;height:1px"></div>
<div class="a gl" style="left:24.5px;top:466.84px;width:987px;height:1px"></div>
<div class="a gl" style="left:24.5px;top:480.17px;width:987px;height:1px"></div>
<div class="a gl" style="left:24.5px;top:493.50px;width:987px;height:1px"></div>
<div class="a" style="left:66.00px;top:188px;width:1px;height:12.7px;background:#ebebeb"></div>
<div class="a gl" style="left:66.00px;top:200.67px;width:1px;height:305.3px"></div>
<div class="a" style="left:108.50px;top:188px;width:1px;height:12.7px;background:#ebebeb"></div>
<div class="a gl" style="left:108.50px;top:200.67px;width:1px;height:305.3px"></div>
<div class="a" style="left:151.50px;top:188px;width:1px;height:12.7px;background:#ebebeb"></div>
<div class="a gl" style="left:151.50px;top:200.67px;width:1px;height:305.3px"></div>
<div class="a" style="left:201.50px;top:188px;width:1px;height:12.7px;background:#ebebeb"></div>
<div class="a gl" style="left:201.50px;top:200.67px;width:1px;height:305.3px"></div>
<div class="a" style="left:318.50px;top:188px;width:1px;height:12.7px;background:#ebebeb"></div>
<div class="a gl" style="left:318.50px;top:200.67px;width:1px;height:305.3px"></div>
<div class="a" style="left:360.50px;top:188px;width:1px;height:12.7px;background:#ebebeb"></div>
<div class="a gl" style="left:360.50px;top:200.67px;width:1px;height:305.3px"></div>
<div class="a" style="left:456.50px;top:188px;width:1px;height:12.7px;background:#ebebeb"></div>
<div class="a gl" style="left:456.50px;top:200.67px;width:1px;height:305.3px"></div>
<div class="a" style="left:499.17px;top:188px;width:1px;height:12.7px;background:#ebebeb"></div>
<div class="a gl" style="left:499.17px;top:200.67px;width:1px;height:305.3px"></div>
<div class="a" style="left:541.83px;top:188px;width:1px;height:12.7px;background:#ebebeb"></div>
<div class="a gl" style="left:541.83px;top:200.67px;width:1px;height:305.3px"></div>
<div class="a" style="left:584.50px;top:188px;width:1px;height:12.7px;background:#ebebeb"></div>
<div class="a gl" style="left:584.50px;top:200.67px;width:1px;height:305.3px"></div>
<div class="a" style="left:627.17px;top:188px;width:1px;height:12.7px;background:#ebebeb"></div>
<div class="a gl" style="left:627.17px;top:200.67px;width:1px;height:305.3px"></div>
<div class="a" style="left:669.84px;top:188px;width:1px;height:12.7px;background:#ebebeb"></div>
<div class="a gl" style="left:669.84px;top:200.67px;width:1px;height:305.3px"></div>
<div class="a" style="left:712.50px;top:188px;width:1px;height:12.7px;background:#ebebeb"></div>
<div class="a gl" style="left:712.50px;top:200.67px;width:1px;height:305.3px"></div>
<div class="a" style="left:755.17px;top:188px;width:1px;height:12.7px;background:#ebebeb"></div>
<div class="a gl" style="left:755.17px;top:200.67px;width:1px;height:305.3px"></div>
<div class="a" style="left:797.84px;top:188px;width:1px;height:12.7px;background:#ebebeb"></div>
<div class="a gl" style="left:797.84px;top:200.67px;width:1px;height:305.3px"></div>
<div class="a" style="left:840.50px;top:188px;width:1px;height:12.7px;background:#ebebeb"></div>
<div class="a gl" style="left:840.50px;top:200.67px;width:1px;height:305.3px"></div>
<div class="a" style="left:883.17px;top:188px;width:1px;height:12.7px;background:#ebebeb"></div>
<div class="a gl" style="left:883.17px;top:200.67px;width:1px;height:305.3px"></div>
<div class="a" style="left:925.84px;top:188px;width:1px;height:12.7px;background:#ebebeb"></div>
<div class="a gl" style="left:925.84px;top:200.67px;width:1px;height:305.3px"></div>
<div class="a" style="left:968.50px;top:188px;width:1px;height:12.7px;background:#ebebeb"></div>
<div class="a gl" style="left:968.50px;top:200.67px;width:1px;height:305.3px"></div>
<div class="a" style="left:1011.17px;top:188px;width:1px;height:12.7px;background:#ebebeb"></div>
<div class="a gl" style="left:1011.17px;top:200.67px;width:1px;height:305.3px"></div>
<div class="a" style="left:0;top:200.1px;width:1012px;height:1px;background:#d2d2d2"></div>
<div class="a" style="left:24.5px;top:188px;width:432.5px;height:12.7px;background:#dcdcdc"></div>
<div class="a" style="left:66.00px;top:188px;width:1px;height:12.7px;background:#e6e6e6"></div>
<div class="a" style="left:108.50px;top:188px;width:1px;height:12.7px;background:#e6e6e6"></div>
<div class="a" style="left:151.50px;top:188px;width:1px;height:12.7px;background:#e6e6e6"></div>
<div class="a" style="left:201.50px;top:188px;width:1px;height:12.7px;background:#e6e6e6"></div>
<div class="a" style="left:318.50px;top:188px;width:1px;height:12.7px;background:#e6e6e6"></div>
<div class="a" style="left:360.50px;top:188px;width:1px;height:12.7px;background:#e6e6e6"></div>
<span class="t ch" style="left:42.3px;top:195.2px;color:#1e6b41;font-weight:bold">A</span>
<span class="t ch" style="left:84.5px;top:195.2px;color:#1e6b41;font-weight:bold">B</span>
<span class="t ch" style="left:127.3px;top:195.2px;color:#1e6b41;font-weight:bold">C</span>
<span class="t ch" style="left:173.8px;top:195.2px;color:#1e6b41;font-weight:bold">D</span>
<span class="t ch" style="left:257.3px;top:195.2px;color:#1e6b41;font-weight:bold">E</span>
<span class="t ch" style="left:336.8px;top:195.2px;color:#1e6b41;font-weight:bold">F</span>
<span class="t ch" style="left:405.8px;top:195.2px;color:#1e6b41;font-weight:bold">G</span>
<span class="t ch" style="left:475.3px;top:195.2px">H</span>
<span class="t ch" style="left:518.0px;top:195.2px">I</span>
<span class="t ch" style="left:560.7px;top:195.2px">J</span>
<span class="t ch" style="left:603.3px;top:195.2px">K</span>
<span class="t ch" style="left:646.0px;top:195.2px">L</span>
<span class="t ch" style="left:688.7px;top:195.2px">M</span>
<span class="t ch" style="left:731.3px;top:195.2px">N</span>
<span class="t ch" style="left:774.0px;top:195.2px">O</span>
<span class="t ch" style="left:816.7px;top:195.2px">P</span>
<span class="t ch" style="left:859.3px;top:195.2px">Q</span>
<span class="t ch" style="left:902.0px;top:195.2px">R</span>
<span class="t ch" style="left:944.7px;top:195.2px">S</span>
<span class="t ch" style="left:987.3px;top:195.2px">T</span>
<div class="a" style="left:0;top:200.67px;width:24.5px;height:305.3px;background:#f4f4f4"></div>
<div class="a" style="left:0;top:200.67px;width:24.5px;height:93.33px;background:#e6e6e6"></div>
<div class="a" style="left:0;top:200.17px;width:24.5px;height:1px;background:#d6d6d6"></div>
<span class="t rh" style="left:0;top:208.2px;color:#1e6b41;font-weight:bold">1</span>
<div class="a" style="left:0;top:213.50px;width:24.5px;height:1px;background:#d6d6d6"></div>
<span class="t rh" style="left:0;top:221.5px;color:#1e6b41;font-weight:bold">2</span>
<div class="a" style="left:0;top:226.84px;width:24.5px;height:1px;background:#d6d6d6"></div>
<span class="t rh" style="left:0;top:234.8px;color:#1e6b41;font-weight:bold">3</span>
<div class="a" style="left:0;top:240.17px;width:24.5px;height:1px;background:#d6d6d6"></div>
<span class="t rh" style="left:0;top:248.2px;color:#1e6b41;font-weight:bold">4</span>
<div class="a" style="left:0;top:253.50px;width:24.5px;height:1px;background:#d6d6d6"></div>
<span class="t rh" style="left:0;top:261.5px;color:#1e6b41;font-weight:bold">5</span>
<div class="a" style="left:0;top:266.84px;width:24.5px;height:1px;background:#d6d6d6"></div>
<span class="t rh" style="left:0;top:274.8px;color:#1e6b41;font-weight:bold">6</span>
<div class="a" style="left:0;top:280.17px;width:24.5px;height:1px;background:#d6d6d6"></div>
<span class="t rh" style="left:0;top:288.2px;color:#1e6b41;font-weight:bold">7</span>
<div class="a" style="left:0;top:293.50px;width:24.5px;height:1px;background:#d6d6d6"></div>
<span class="t rh" style="left:0;top:300.7px;font-size:9.4px;color:#707070">8</span>
<div class="a" style="left:0;top:306.84px;width:24.5px;height:1px;background:#e4e4e4"></div>
<span class="t rh" style="left:0;top:314.0px;font-size:9.4px;color:#707070">9</span>
<div class="a" style="left:0;top:320.17px;width:24.5px;height:1px;background:#e4e4e4"></div>
<span class="t rh" style="left:0;top:327.4px;font-size:9.4px;color:#707070">10</span>
<div class="a" style="left:0;top:333.50px;width:24.5px;height:1px;background:#e4e4e4"></div>
<span class="t rh" style="left:0;top:340.7px;font-size:9.4px;color:#707070">11</span>
<div class="a" style="left:0;top:346.84px;width:24.5px;height:1px;background:#e4e4e4"></div>
<span class="t rh" style="left:0;top:354.0px;font-size:9.4px;color:#707070">12</span>
<div class="a" style="left:0;top:360.17px;width:24.5px;height:1px;background:#e4e4e4"></div>
<span class="t rh" style="left:0;top:367.4px;font-size:9.4px;color:#707070">13</span>
<div class="a" style="left:0;top:373.50px;width:24.5px;height:1px;background:#e4e4e4"></div>
<span class="t rh" style="left:0;top:380.7px;font-size:9.4px;color:#707070">14</span>
<div class="a" style="left:0;top:386.84px;width:24.5px;height:1px;background:#e4e4e4"></div>
<span class="t rh" style="left:0;top:394.0px;font-size:9.4px;color:#707070">15</span>
<div class="a" style="left:0;top:400.17px;width:24.5px;height:1px;background:#e4e4e4"></div>
<span class="t rh" style="left:0;top:407.4px;font-size:9.4px;color:#707070">16</span>
<div class="a" style="left:0;top:413.50px;width:24.5px;height:1px;background:#e4e4e4"></div>
<span class="t rh" style="left:0;top:420.7px;font-size:9.4px;color:#707070">17</span>
<div class="a" style="left:0;top:426.84px;width:24.5px;height:1px;background:#e4e4e4"></div>
<span class="t rh" style="left:0;top:434.0px;font-size:9.4px;color:#707070">18</span>
<div class="a" style="left:0;top:440.17px;width:24.5px;height:1px;background:#e4e4e4"></div>
<span class="t rh" style="left:0;top:447.4px;font-size:9.4px;color:#707070">19</span>
<div class="a" style="left:0;top:453.50px;width:24.5px;height:1px;background:#e4e4e4"></div>
<span class="t rh" style="left:0;top:460.7px;font-size:9.4px;color:#707070">20</span>
<div class="a" style="left:0;top:466.84px;width:24.5px;height:1px;background:#e4e4e4"></div>
<span class="t rh" style="left:0;top:474.0px;font-size:9.4px;color:#707070">21</span>
<div class="a" style="left:0;top:480.17px;width:24.5px;height:1px;background:#e4e4e4"></div>
<span class="t rh" style="left:0;top:487.4px;font-size:9.4px;color:#707070">22</span>
<div class="a" style="left:0;top:493.50px;width:24.5px;height:1px;background:#e4e4e4"></div>
<span class="t rh" style="left:0;top:500.7px;font-size:9.4px;color:#707070">23</span>
<svg style="left:13px;top:190px" width="9.5" height="9" viewBox="0 0 9.5 9"><path d="M9.5 0V9H0Z" fill="#b9b9b9"></path></svg>
<div class="a" style="left:24.5px;top:200.67px;width:432.5px;height:13.33px;background:#3a5ba5"></div>
<div class="a" style="left:25px;top:201.17px;width:41.5px;height:12.83px;background:#4472c4"></div>
<div class="a" style="left:24.5px;top:214.00px;width:432.5px;height:13.33px;background:#aab3cd"></div>
<div class="a" style="left:24.5px;top:227.34px;width:432.5px;height:13.33px;background:#c9c9c9"></div>
<div class="a" style="left:24.5px;top:240.67px;width:432.5px;height:13.33px;background:#aab3cd"></div>
<div class="a" style="left:24.5px;top:254.00px;width:432.5px;height:13.33px;background:#c9c9c9"></div>
<div class="a" style="left:24.5px;top:267.34px;width:432.5px;height:13.33px;background:#aab3cd"></div>
<div class="a" style="left:24.5px;top:280.67px;width:432.5px;height:13.33px;background:#c9c9c9"></div>
<div class="a" style="left:24.5px;top:214.00px;width:177.5px;height:26.67px;background:#3c5ea9"></div>
<div class="a" style="left:24.5px;top:226.94px;width:432.5px;height:0.8px;background:rgba(255,255,255,0.28)"></div>
<div class="a" style="left:24.5px;top:240.27px;width:432.5px;height:0.8px;background:rgba(255,255,255,0.28)"></div>
<div class="a" style="left:24.5px;top:253.60px;width:432.5px;height:0.8px;background:rgba(255,255,255,0.28)"></div>
<div class="a" style="left:24.5px;top:266.94px;width:432.5px;height:0.8px;background:rgba(255,255,255,0.28)"></div>
<div class="a" style="left:24.5px;top:280.27px;width:432.5px;height:0.8px;background:rgba(255,255,255,0.28)"></div>
<div class="a" style="left:66.10px;top:214.00px;width:0.8px;height:80.00px;background:rgba(255,255,255,0.07)"></div>
<div class="a" style="left:108.60px;top:214.00px;width:0.8px;height:80.00px;background:rgba(255,255,255,0.07)"></div>
<div class="a" style="left:151.60px;top:214.00px;width:0.8px;height:80.00px;background:rgba(255,255,255,0.07)"></div>
<div class="a" style="left:201.60px;top:214.00px;width:0.8px;height:80.00px;background:rgba(255,255,255,0.07)"></div>
<div class="a" style="left:318.60px;top:214.00px;width:0.8px;height:80.00px;background:rgba(255,255,255,0.07)"></div>
<div class="a" style="left:360.60px;top:214.00px;width:0.8px;height:80.00px;background:rgba(255,255,255,0.07)"></div>
<span class="t cell" style="left: 25.9px; top: 208.3px; color: rgb(255, 255, 255); font-weight: bold; font-size: 9.5px; --w: 14.6; --k: 0.8132;">Sno</span>
<span class="t cell" style="left: 69px; top: 208.3px; color: rgb(255, 255, 255); font-weight: bold; font-size: 9.5px; --w: 23.5; --k: 0.9082;">Name</span>
<span class="t cell" style="left: 111.5px; top: 208.3px; color: rgb(255, 255, 255); font-weight: bold; font-size: 9.5px; --w: 21.5; --k: 0.8478;">Email</span>
<span class="t cell" style="left: 154px; top: 208.3px; color: rgb(255, 255, 255); font-weight: bold; font-size: 9.5px; --w: 31; --k: 0.8155;">Address</span>
<span class="t cell" style="left: 203.3px; top: 208.3px; color: rgb(255, 255, 255); font-weight: bold; font-size: 9.5px; --w: 18.3; --k: 0.8886;">Date</span>
<span class="t cell" style="left: 321px; top: 208.3px; color: rgb(255, 255, 255); font-weight: bold; font-size: 9.5px; --w: 14.7; --k: 0.8188;">Age</span>
<span class="t cell" style="left: 364px; top: 208.3px; color: rgb(255, 255, 255); font-weight: bold; font-size: 9.5px; --w: 41.6; --k: 0.8474;">Comments</span>
<div class="a fb" style="left:55.7px;top:202.5px"></div>
<div class="a fb" style="left:98.2px;top:202.5px"></div>
<div class="a fb" style="left:141.2px;top:202.5px"></div>
<div class="a fb" style="left:191.2px;top:202.5px"></div>
<div class="a fb" style="left:308.2px;top:202.5px"></div>
<div class="a fb" style="left:350.2px;top:202.5px"></div>
<div class="a fb" style="left:446.2px;top:202.5px"></div>
<span class="t cell r" style="right: 959.5px; top: 221.2px; color: rgb(185, 196, 223); --w: 4.8; --k: 0.9198;">1</span>
<span class="t cell" style="left: 69px; top: 221.2px; color: rgb(185, 196, 223); --w: 26.5; --k: 0.9243;">Venkat</span>
<span class="t cell" style="left: 111.5px; top: 221.2px; color: rgb(53, 87, 160); text-decoration: underline; --w: 40; --k: 0.9965;">codevenk</span>
<span class="t cell" style="left: 154px; top: 221.2px; color: rgb(230, 235, 246); --w: 42.5; --k: 0.9264;">Hyderabad</span>
<span class="t cell r" style="right: 664.5px; top: 221.2px; color: rgb(31, 31, 31); --w: 10; --k: 0.9581;">25</span>
<span class="t cell r" style="right: 959.5px; top: 234.5px; color: rgb(185, 196, 223); --w: 4.8; --k: 0.9198;">2</span>
<span class="t cell" style="left: 69px; top: 234.5px; color: rgb(185, 196, 223); --w: 37; --k: 0.9097;">Subbarao</span>
<span class="t cell" style="left: 111.5px; top: 234.5px; color: rgb(53, 87, 160); text-decoration: underline; --w: 40; --k: 0.9835;">codesubb</span>
<span class="t cell" style="left: 154px; top: 234.5px; color: rgb(230, 235, 246); --w: 42.5; --k: 0.9264;">Hyderabad</span>
<span class="t cell r" style="right: 664.5px; top: 234.5px; color: rgb(31, 31, 31); --w: 10; --k: 0.9581;">30</span>
<span class="t cell r" style="right: 959.5px; top: 247.9px; color: rgb(31, 31, 31); --w: 4.8; --k: 0.9198;">3</span>
<span class="t cell" style="left: 69px; top: 247.9px; color: rgb(31, 31, 31); --w: 24; --k: 0.8688;">James</span>
<span class="t cell" style="left: 111.5px; top: 247.9px; color: rgb(43, 90, 163); text-decoration: underline; --w: 40; --k: 0.8898;">james@gn</span>
<span class="t cell" style="left: 154px; top: 247.9px; color: rgb(31, 31, 31); --w: 33; --k: 0.9897;">Mumbai</span>
<span class="t cell r" style="right: 664.5px; top: 247.9px; color: rgb(31, 31, 31); --w: 10; --k: 0.9581;">15</span>
<span class="t cell r" style="right: 959.5px; top: 261.2px; color: rgb(31, 31, 31); --w: 4.8; --k: 0.9198;">4</span>
<span class="t cell" style="left: 69px; top: 261.2px; color: rgb(31, 31, 31); --w: 20.5; --k: 0.9143;">Peter</span>
<span class="t cell" style="left: 111.5px; top: 261.2px; color: rgb(43, 90, 163); text-decoration: underline; --w: 40; --k: 0.9107;">peter@gm</span>
<span class="t cell" style="left: 154px; top: 261.2px; color: rgb(31, 31, 31); --w: 20; --k: 0.9357;">Delhi</span>
<span class="t cell r" style="right: 664.5px; top: 261.2px; color: rgb(31, 31, 31); --w: 10; --k: 0.9581;">16</span>
<span class="t cell r" style="right: 959.5px; top: 274.5px; color: rgb(31, 31, 31); --w: 4.8; --k: 0.9198;">5</span>
<span class="t cell" style="left: 69px; top: 274.5px; color: rgb(31, 31, 31); --w: 17; --k: 0.8587;">Ram</span>
<span class="t cell" style="left: 111.5px; top: 274.5px; color: rgb(43, 90, 163); text-decoration: underline; --w: 40; --k: 0.9110;">ram@gma</span>
<span class="t cell" style="left: 154px; top: 274.5px; color: rgb(31, 31, 31); --w: 32; --k: 0.9159;">Chennai</span>
<span class="t cell r" style="right: 664.5px; top: 274.5px; color: rgb(31, 31, 31); --w: 10; --k: 0.9581;">20</span>
<span class="t cell r" style="right: 959.5px; top: 287.9px; color: rgb(31, 31, 31); --w: 4.8; --k: 0.9198;">6</span>
<span class="t cell" style="left: 69px; top: 287.9px; color: rgb(31, 31, 31); --w: 34.5; --k: 0.9192;">Prasanth</span>
<span class="t cell" style="left: 111.5px; top: 287.9px; color: rgb(43, 90, 163); text-decoration: underline; --w: 40; --k: 0.9329;">pr@gmail.</span>
<span class="t cell" style="left: 154px; top: 287.9px; color: rgb(31, 31, 31); --w: 42.5; --k: 0.9264;">Hyderabad</span>
<span class="t cell r" style="right: 664.5px; top: 287.9px; color: rgb(31, 31, 31); --w: 10; --k: 0.9581;">18</span>
<div class="a" style="left:24.5px;top:200.87px;width:432px;height:1px;background:#b4c5e6"></div>
<div class="a" style="left:24.4px;top:200.87px;width:0.9px;height:92.93px;background:rgba(255,255,255,0.6)"></div>
<div class="a" style="left:24.5px;top:211.80px;width:432.5px;height:2.2px;background:#2f4a8c"></div>
<div class="a" style="left:23.5px;top:199.97px;width:434px;height:94.73px;border:1px solid #1e6b41"></div>
<div class="a" style="left:454.5px;top:291.50px;width:4px;height:4px;background:#1e6b41;border:0.7px solid #fff"></div>
<!-- red annotations -->
<svg style="left:0;top:0" width="1024" height="576" viewBox="0 0 1024 576"><g fill="none" stroke="#d8202d" stroke-width="2.8" stroke-linejoin="miter">
<rect x="21.4" y="197.5" width="446.2" height="20"></rect>
<rect x="206.75" y="223.65" width="106.9" height="62.7" stroke-width="2.7"></rect>
<rect x="365.5" y="219.8" width="83.3" height="69.5"></rect>
<rect x="205.4" y="343.25" width="282.6" height="64.15" stroke="#cf1f2c"></rect>
<g fill="#fff">
<path d="M484.06 208.5L490.3 205.3V206.4H499.7V210.5H490.3V211.7Z"></path>
<path d="M255.2 295L269.65 310.35H263.2V327.4H246.65V310.35H240.75Z"></path>
<path d="M414.95 296.4L427.94 315.1H422.2V335.5H407.7V315.1H401.96Z"></path>
</g></g></svg>
<span class="t" style="left: 275.3px; top: 376.5px; font-size: 9px; color: rgb(17, 17, 17); font-weight: bold; --w: 110.5; --k: 1.0623;">No Data before Flow run</span>
<!--GRID-CONTENT-->
<!-- ===== BOTTOM ===== -->
<!-- scrollbars -->
<div class="a" style="left:1011.5px;top:200.67px;width:12.5px;height:305.3px;background:#fff"></div>
<div class="a" style="left:1014.5px;top:200.67px;width:9.5px;height:305.3px;background:#dcdcdc"></div>
<div class="a sb" style="left:1014.5px;top:200.67px;width:9.5px;height:12px"></div>
<div class="a sb" style="left:1014.5px;top:212.5px;width:9.5px;height:56px"></div>
<div class="a sb" style="left:1014.5px;top:494.5px;width:9.5px;height:11px"></div>
<svg style="left:1016.8px;top:205px" width="5" height="3" viewBox="0 0 5 3"><path d="M0 3L2.5 0L5 3Z" fill="#6e6e6e"></path></svg>
<svg style="left:1016.8px;top:498.6px" width="5" height="3" viewBox="0 0 5 3"><path d="M0 0L2.5 3L5 0Z" fill="#6e6e6e"></path></svg>
<div class="a" style="left:0;top:505.9px;width:1024px;height:8.6px;background:#f4f4f4"></div>
<div class="a" style="left:25px;top:505.9px;width:989px;height:8.6px;background:#dedede"></div>
<div class="a sb" style="left:25px;top:505.9px;width:10.5px;height:8.6px"></div>
<div class="a sb" style="left:35.5px;top:505.9px;width:356.5px;height:8.6px"></div>
<div class="a sb" style="left:1004px;top:505.9px;width:10px;height:8.6px"></div>
<svg style="left:28.8px;top:508px" width="3" height="5" viewBox="0 0 3 5"><path d="M3 0L0 2.5L3 5Z" fill="#555"></path></svg>
<svg style="left:1007.8px;top:508px" width="3" height="5" viewBox="0 0 3 5"><path d="M0 0L3 2.5L0 5Z" fill="#555"></path></svg>
<!-- sheet tabs -->
<div class="a" style="left:0;top:514.4px;width:1024px;height:20.6px;background:#f4f4f4"></div>
<svg style="left:9px;top:521.5px" width="4" height="7" viewBox="0 0 4 7"><path d="M3.5 0.4L0.6 3.5L3.5 6.6" stroke="#c6c6c6" stroke-width="0.8" fill="none"></path></svg>
<svg style="left:30.5px;top:521.5px" width="4" height="7" viewBox="0 0 4 7"><path d="M0.5 0.4L3.4 3.5L0.5 6.6" stroke="#c6c6c6" stroke-width="0.8" fill="none"></path></svg>
<div class="a" style="left:49.5px;top:521.4px;width:8px;height:6.6px;border-top:1px solid #555;border-bottom:1px solid #555"></div>
<div class="a" style="left:49.5px;top:524.2px;width:8px;height:1px;background:#555"></div>
<span class="t" style="left: 71.5px; top: 524.6px; font-size: 9.3px; color: rgb(47, 47, 47); -webkit-text-stroke: 0.15px rgb(47, 47, 47); --w: 73.5; --k: 0.9808;">Employee_Details</span>
<div class="a" style="left:70px;top:533.4px;width:76.5px;height:1.1px;background:#5f9b7b"></div>
<svg style="left:159.5px;top:521px" width="7" height="7" viewBox="0 0 7 7"><path d="M3.5 0V7M0 3.5H7" stroke="#555" stroke-width="0.8"></path></svg>
<!-- status bar -->
<div class="a" style="left:0;top:535px;width:1024px;height:14.5px;background:#fff"></div>
<span class="t st" style="left: 9.5px; top: 544.7px; --w: 102; --k: 0.9365;">Calculation Mode: Automatic</span>
<span class="t st" style="left: 124px; top: 544.7px; --w: 69; --k: 0.9162;">Workbook Statistics</span>
<span class="t st" style="left: 638.5px; top: 544.7px; --w: 77.5; --k: 0.8927;">Average: 12.08333333</span>
<span class="t st" style="left: 725.5px; top: 544.7px; --w: 34; --k: 0.9120;">Count: 37</span>
<span class="t st" style="left: 768.8px; top: 544.7px; --w: 32.5; --k: 0.8832;">Sum: 145</span>
<div class="cv" style="left:811.3px;top:541.8px;width:2.6px;height:2.6px;border-color:#605e5c"></div>
<span class="t st" style="left: 843.5px; top: 544.7px; --w: 96.5; --k: 0.9225;">Give Feedback to Microsoft</span>
<div class="a" style="left:968px;top:543.6px;width:7px;height:0.9px;background:#555"></div>
<span class="t st" style="left: 981.8px; top: 544.7px; --w: 18; --k: 0.8188;">100%</span>
<svg style="left:1005.5px;top:540.5px" width="7" height="7" viewBox="0 0 7 7"><path d="M3.5 0V7M0 3.5H7" stroke="#444" stroke-width="0.8"></path></svg>
<!--BOTTOM-CONTENT-->
<!-- ===== TASKBAR ===== -->
<div class="a" style="left:0;top:549.4px;width:1024px;height:26.6px;background:#1b2a31"></div>
<div class="a" style="left:32px;top:549.4px;width:229.5px;height:26.6px;background:#f2f2f2"></div>
<svg style="left:10.5px;top:557.7px" width="11" height="11" viewBox="0 0 11 11"><path d="M0 1.5L4.6 0.85V5.2H0ZM5.3 0.75L11 0V5.2H5.3ZM0 5.9H4.6V10.2L0 9.55ZM5.3 5.9H11V11L5.3 10.3Z" fill="#fff"></path></svg>
<svg style="left:40px;top:557.5px" width="11" height="11" viewBox="0 0 11 11"><circle cx="6.6" cy="4.3" r="3.6" stroke="#3a3a3a" stroke-width="1" fill="none"></circle><path d="M4.1 7L0.6 10.5" stroke="#3a3a3a" stroke-width="1.1"></path></svg>
<span class="t" style="left: 58.5px; top: 562.9px; font-size: 10px; color: rgb(60, 60, 60); --w: 87.5; --k: 0.9899;">Type here to search</span>
<!-- task view -->
<svg style="left:272px;top:557.5px" width="11" height="11" viewBox="0 0 11 11"><rect x="1.6" y="2.6" width="5.6" height="5.8" stroke="#fff" stroke-width="0.9" fill="none"></rect><path d="M0.4 0.5V2.4H8.4V0.5M0.4 10.5V8.6H8.4V10.5" stroke="#fff" stroke-width="0.9" fill="none"></path><path d="M10.2 1.5V3.2M10.2 4.6V6.3M10.2 7.8V9.4" stroke="#fff" stroke-width="0.9"></path></svg>
<div class="a" style="left:296.7px;top:555.5px;width:0.8px;height:15px;background:#5d686d"></div>
<!-- running indicators -->
<div class="a ul" style="left:309px;width:28.5px"></div><div class="a ul" style="left:343px;width:29px"></div><div class="a ul" style="left:377.5px;width:28.5px"></div><div class="a ul" style="left:412px;width:28px"></div><div class="a ul" style="left:472px;width:28.5px"></div><div class="a ul" style="left:507px;width:28px"></div>
<div class="a" style="left:538px;top:549.4px;width:34.5px;height:26.6px;background:#3b4850"></div>
<div class="a ul" style="left:538px;width:34.5px;background:#9cc8ea"></div>
<div class="a ul" style="left:576px;width:29px"></div><div class="a ul" style="left:611px;width:28px"></div><div class="a ul" style="left:645px;width:29px"></div><div class="a ul" style="left:680px;width:27.5px"></div><div class="a ul" style="left:714px;width:28px"></div>
<!-- edge -->
<svg style="left:309px;top:554.5px" width="16" height="16" viewBox="0 0 16 16"><circle cx="8" cy="8" r="7.6" fill="#1b9de2"></circle><path d="M0.6 9.5Q0.4 3 6.5 1Q12 -0.3 15 4.2Q16.3 7.5 13.8 9.4Q11 10.5 9.8 8.6Q10.2 6 7.8 5.4Q3.6 5.2 3.2 9.6Q3.5 14 8.5 15.5Q2 15.6 0.6 9.5Z" fill="#35c1f1"></path><path d="M3.2 9.6Q3.6 5.2 7.8 5.4Q5.5 7.2 6.2 10.2Q7.2 13.6 11.6 13.2Q13.4 12.8 14.6 11.4Q13 15 8.5 15.5Q3.5 14 3.2 9.6Z" fill="#0c59a4"></path><path d="M6.5 1Q12 -0.3 15 4.2Q16.3 7.5 13.8 9.4Q11 10.5 9.8 8.6Q10.2 6 7.8 5.4Q10 2 6.5 1Z" fill="#49d66b" fill-opacity="0.75"></path></svg>
<span class="t tl" style="left: 328px; --w: 9; --k: 0.7451;">P...</span>
<!-- outlook -->
<svg style="left:344px;top:555.5px" width="17" height="15" viewBox="0 0 17 15"><rect x="5" y="0" width="11" height="9" rx="0.8" fill="#1a7fd4"></rect><rect x="10.5" y="0" width="5.5" height="4.5" fill="#35a7f0"></rect><rect x="0" y="2" width="8" height="8" rx="0.8" fill="#0f5fb8"></rect><circle cx="4" cy="6" r="2" stroke="#fff" stroke-width="1" fill="none"></circle><rect x="6.5" y="7.2" width="10.5" height="7.6" rx="0.6" fill="#f3c27a"></rect><path d="M6.7 7.6L11.75 11.6L16.8 7.6" stroke="#fbe6c4" stroke-width="0.9" fill="none"></path></svg>
<span class="t tl" style="left: 362.5px; --w: 9.5; --k: 0.6941;">C...</span>
<!-- mail -->
<svg style="left:379px;top:557.7px" width="14.5" height="10.2" viewBox="0 0 14.5 11" preserveAspectRatio="none"><rect x="0" y="0" width="14.5" height="11" rx="0.8" fill="#f0c070"></rect><path d="M0.3 0.5L7.25 6.4L14.2 0.5" stroke="#fbe9c8" stroke-width="1" fill="none"></path></svg>
<span class="t tl" style="left: 396px; --w: 9.5; --k: 0.6941;">R...</span>
<!-- bell -->
<svg style="left:414px;top:556px" width="12.5" height="13.5" viewBox="0 0 12.5 13.5"><path d="M6.25 0.4Q10.2 0.8 10.3 5.2Q10.4 8.6 12.2 10.2H0.3Q2.1 8.6 2.2 5.2Q2.3 0.8 6.25 0.4Z" fill="#f2c46e"></path><path d="M4.4 11Q6.25 13.8 8.1 11Z" fill="#e9a93c"></path></svg>
<span class="t tl" style="left: 430.5px; --w: 8.5; --k: 0.6948;">2...</span>
<!-- people -->
<svg style="left:448px;top:555.5px" width="16.5" height="15" viewBox="0 0 16.5 15"><rect x="5.5" y="0.5" width="11" height="9.5" rx="0.6" fill="#1786d8"></rect><rect x="11" y="0.5" width="5.5" height="9.5" fill="#2ea4f2"></rect><circle cx="5.6" cy="5.4" r="2.9" fill="#35bdf5"></circle><path d="M0.3 14.6Q0.3 9.4 5.6 9.4Q10.9 9.4 10.9 14.6Z" fill="#35bdf5"></path></svg>
<!-- teams -->
<svg style="left:472px;top:555px" width="17" height="16" viewBox="0 0 17 16"><circle cx="12.6" cy="3" r="2" fill="#7b83eb"></circle><circle cx="8" cy="2.6" r="2.5" fill="#5b5fc7"></circle><path d="M10.4 5.5H15.6Q16.4 5.5 16.4 6.3V9.6Q16.2 12 13.6 12H10.4Z" fill="#7b83eb"></path><path d="M4.4 5.5H11.8V11Q11.4 14.2 8 14.2Q4.6 14.2 4.4 11Z" fill="#5b5fc7"></path><rect x="0" y="3.6" width="8" height="8" rx="0.8" fill="#4b53bc"></rect><path d="M2 5.8H6M4 5.8V9.8" stroke="#fff" stroke-width="1"></path><rect x="7.6" y="8.8" width="9.2" height="7" rx="3.5" fill="#d23842"></rect></svg>
<span class="t" style="left: 480.8px; top: 567.5px; font-size: 5.4px; color: rgb(255, 255, 255); font-weight: bold; --w: 6.4; --k: 1.0396;">9+</span>
<span class="t tl" style="left: 490.5px; --w: 9.5; --k: 0.7765;">Ir...</span>
<!-- notepad -->
<svg style="left:508px;top:555px" width="14.5" height="16" viewBox="0 0 14.5 16"><path d="M4.2 1.4L13.8 0.6L11.6 13.2L1.4 14.6Z" fill="#d9eef8"></path><path d="M4.2 1.4L13.8 0.6L13.4 3L3.9 3.9Z" fill="#6bb8dc"></path><path d="M1.4 14.6L11.6 13.2L10 15.4L0.6 15.6Z" fill="#9aa7ad"></path><path d="M4 6L11.6 5.2M3.6 8.4L11.2 7.6M3.2 10.8L10.8 10" stroke="#a9c4d0" stroke-width="0.6"></path></svg>
<span class="t tl" style="left: 526px; --w: 8; --k: 0.7676;">•...</span>
<!-- chrome -->
<svg style="left:541.5px;top:554.5px" width="16" height="16" viewBox="0 0 16 16"><circle cx="8" cy="8" r="7.6" fill="#fbbc05"></circle><path d="M8 8L1.42 4.2A7.6 7.6 0 0 1 14.58 4.2Z" fill="#ea4335"></path><path d="M8 8L1.42 4.2A7.6 7.6 0 0 0 8 15.6Z" fill="#34a853"></path><path d="M1.42 4.2A7.6 7.6 0 0 1 14.58 4.2L8 4.5Z" fill="#ea4335"></path><circle cx="8" cy="8" r="3.5" fill="#fff"></circle><circle cx="8" cy="8" r="2.7" fill="#4285f4"></circle><circle cx="11.4" cy="11.6" r="4" fill="#5b6469" stroke="#3b4850" stroke-width="0.6"></circle><circle cx="11.4" cy="10.4" r="1.4" fill="#e8eaed"></circle><path d="M8.8 13.9Q9 11.9 11.4 11.9Q13.8 11.9 14 13.9Q11.4 15.6 8.8 13.9Z" fill="#e8eaed"></path></svg>
<span class="t tl" style="left: 561px; --w: 8.5; --k: 0.6438;">E...</span>
<!-- folder -->
<svg style="left:579.5px;top:555.5px" width="10" height="15" viewBox="0 0 10 15"><path d="M0.6 1L5.6 0.3V1.6L9.6 2.4V12.6L0.6 14.6Z" fill="#f7d67a"></path><path d="M0.6 2.6L6.6 1.6V13.4L0.6 14.6Z" fill="#e9b84a"></path><path d="M6.6 1.6L9.6 2.4V12.6L6.6 13.4Z" fill="#fbe6a8"></path></svg>
<span class="t tl" style="left: 594.5px; --w: 9.5; --k: 0.7865;">P...</span>
<!-- sticky notes -->
<svg style="left:612px;top:556px" width="14.5" height="14" viewBox="0 0 14.5 14"><rect x="0" y="0" width="14.5" height="14" rx="0.6" fill="#f9d71c"></rect><path d="M14.5 8.6V14H9Z" fill="#3b3a39"></path><path d="M9 14L9.6 9.2L14.5 8.6Z" fill="#c9a800"></path></svg>
<span class="t tl" style="left: 629.5px; --w: 8.5; --k: 0.6438;">S...</span>
<!-- snip -->
<svg style="left:646.5px;top:555.5px" width="15" height="15" viewBox="0 0 15 15"><ellipse cx="7.6" cy="4.6" rx="7" ry="4.2" fill="#f1eef3" stroke="#b84a68" stroke-width="0.8" transform="rotate(-18 7.6 4.6)"></ellipse><path d="M3 6L12.4 2.8" stroke="#d88aa0" stroke-width="0.7"></path><path d="M6.4 5L8.4 11M9.6 4.2L7 11" stroke="#8a8f94" stroke-width="0.9"></path><circle cx="6.4" cy="12.4" r="1.7" stroke="#1e8fd8" stroke-width="1.1" fill="none"></circle><circle cx="10" cy="12.2" r="1.7" stroke="#1e8fd8" stroke-width="1.1" fill="none"></circle></svg>
<span class="t tl" style="left: 664px; --w: 9; --k: 0.6817;">S...</span>
<!-- word -->
<svg style="left:686px;top:556px" width="15.5" height="14" viewBox="0 0 15.5 14"><rect x="4" y="0" width="11.5" height="14" rx="0.9" fill="#2b7cd3"></rect><rect x="4" y="0" width="11.5" height="3.5" fill="#41a5ee"></rect><rect x="4" y="7" width="11.5" height="3.5" fill="#185abd"></rect><rect x="4" y="10.5" width="11.5" height="3.5" fill="#103f91"></rect><rect x="0" y="3" width="8.4" height="8.4" rx="0.8" fill="#185abd"></rect><path d="M1.7 5L2.9 9.4L4.2 5.6L5.5 9.4L6.7 5" stroke="#fff" stroke-width="0.85" fill="none"></path></svg>
<!-- paint -->
<svg style="left:720px;top:554.5px" width="16.5" height="16.5" viewBox="0 0 16.5 16.5"><path d="M7.6 4.2Q13.4 3.4 14.6 7.6Q15 11.4 11 12.2Q9.2 12.2 9.6 13.8Q9.6 15.8 6.6 15.6Q0.6 14.6 0.8 9.6Q1.6 5.2 7.6 4.2Z" fill="#e9e1cf" stroke="#9b8f78" stroke-width="0.5"></path><circle cx="4.2" cy="9" r="1.3" fill="#e5443c"></circle><circle cx="7.6" cy="6.8" r="1.3" fill="#3c8de0"></circle><circle cx="11.4" cy="8" r="1.3" fill="#f2b632"></circle><circle cx="5" cy="12.4" r="1.3" fill="#46a658"></circle><path d="M15.8 0.6L9.4 9.2L8.2 8.4L14.4 0.2Z" fill="#c98a3c"></path><path d="M8.2 8.4L9.4 9.2L7.8 11.2Z" fill="#444"></path></svg>
<!-- help -->
<svg style="left:752.5px;top:555.5px" width="16" height="15" viewBox="0 0 16 15"><circle cx="7.2" cy="7.4" r="6.6" fill="#1e90d8" stroke="#e8f3fb" stroke-width="1.2"></circle><path d="M5 5.6Q5.2 3.4 7.3 3.4Q9.6 3.6 9.4 5.6Q9.2 6.8 7.4 7.8V9" stroke="#fff" stroke-width="1.4" fill="none"></path><circle cx="7.4" cy="11" r="0.9" fill="#fff"></circle><circle cx="13" cy="11.6" r="2.6" fill="#f2c232"></circle><path d="M13 10.2V12.2" stroke="#fff" stroke-width="0.8"></path></svg>
<!-- weather -->
<svg style="left:788px;top:555.5px" width="15" height="15" viewBox="0 0 15 15"><path d="M8.4 0.8Q13.6 3.6 11.8 9.6Q8.6 12.4 4.4 10.2Q9.8 8.4 8.4 0.8Z" fill="#f6c945"></path><path d="M0.6 12.4Q0.8 9.8 3.6 10.2Q5 8 7.6 9.2Q9.6 9.2 9.8 11Q12.6 11 12.4 13.2Q12 14.4 10.4 14.4H2.4Q0.6 14.2 0.6 12.4Z" fill="#e9dcae"></path></svg>
<span class="t" style="left: 808.5px; top: 563px; font-size: 9.4px; color: rgb(255, 255, 255); --w: 19.5; --k: 0.9306;">15°C</span>
<!-- tray -->
<svg style="left:839.5px;top:559.5px" width="8" height="5" viewBox="0 0 8 5"><path d="M0.5 4.5L4 0.8L7.5 4.5" stroke="#fff" stroke-width="0.9" fill="none"></path></svg>
<svg style="left:854px;top:558.5px" width="11.5" height="7.5" viewBox="0 0 11.5 7.5"><path d="M2.6 7.3Q0.2 7.1 0.3 5Q0.6 3.2 2.6 3.2Q3.6 0.4 6.4 0.6Q8.6 1 9 3.2Q11.3 3.4 11.2 5.4Q11 7.2 9 7.3Z" fill="#2a8de6"></path></svg>
<svg style="left:871px;top:559px" width="10.5" height="7" viewBox="0 0 10.5 7"><rect x="2.6" y="0.9" width="7.4" height="5" stroke="#fff" stroke-width="0.8" fill="none"></rect><rect x="3.4" y="1.7" width="4" height="3.4" fill="#fff"></rect><path d="M1.4 0.2V2.4M0.4 2.2H2.4V4.2Q1.4 5 1.4 6.6" stroke="#fff" stroke-width="0.7" fill="none"></path></svg>
<svg style="left:888px;top:557.5px" width="9" height="9" viewBox="0 0 9 9"><path d="M0.8 8.6A7.8 7.8 0 0 1 8.6 0.8" stroke="#9aa3a8" stroke-width="0.9" fill="none"></path><path d="M3.2 8.6A5.4 5.4 0 0 1 8.6 3.2" stroke="#dfe4e7" stroke-width="0.9" fill="none"></path><path d="M5.6 8.6A3 3 0 0 1 8.6 5.6" stroke="#fff" stroke-width="0.9" fill="none"></path><circle cx="8" cy="8" r="0.9" fill="#fff"></circle></svg>
<svg style="left:902.5px;top:557.5px" width="9.5" height="9" viewBox="0 0 9.5 9"><path d="M0.5 3.2H2.2L4.4 1V8L2.2 5.8H0.5Z" stroke="#fff" stroke-width="0.8" fill="none" stroke-linejoin="round"></path><path d="M5.8 3.2Q6.8 4.5 5.8 5.8M7.2 2Q9 4.5 7.2 7" stroke="#fff" stroke-width="0.7" fill="none"></path><path d="M8.6 1Q10.6 4.5 8.6 8" stroke="#8e989d" stroke-width="0.7" fill="none"></path></svg>
<span class="t" style="left: 920.5px; top: 562.8px; font-size: 8px; color: rgb(255, 255, 255); --w: 14.5; --k: 0.8360;">ENG</span>
<span class="t" style="left: 949px; top: 556.8px; font-size: 8px; color: rgb(255, 255, 255); --w: 31; --k: 0.9211;">11:16 PM</span>
<span class="t" style="left: 943.7px; top: 568.8px; font-size: 8px; color: rgb(255, 255, 255); --w: 40.3; --k: 0.9848;">22-12-2021</span>
<svg style="left:997px;top:556.5px" width="14" height="14" viewBox="0 0 14 14"><path d="M0.6 0.6H10.4V8.2H4.4L2.2 10.4V8.2H0.6Z" fill="#fff"></path><path d="M2.4 2.6H8.6M2.4 4.4H8.6M2.4 6.2H6.6" stroke="#1b2a31" stroke-width="0.7"></path><circle cx="9.8" cy="10" r="3.6" fill="#1b2a31" stroke="#fff" stroke-width="0.8"></circle></svg>
<span class="t" style="left:1005px;top:566.7px;font-size:5.6px;color:#fff;font-weight:bold">6</span>
<!--TASKBAR-CONTENT-->

</body></html>
